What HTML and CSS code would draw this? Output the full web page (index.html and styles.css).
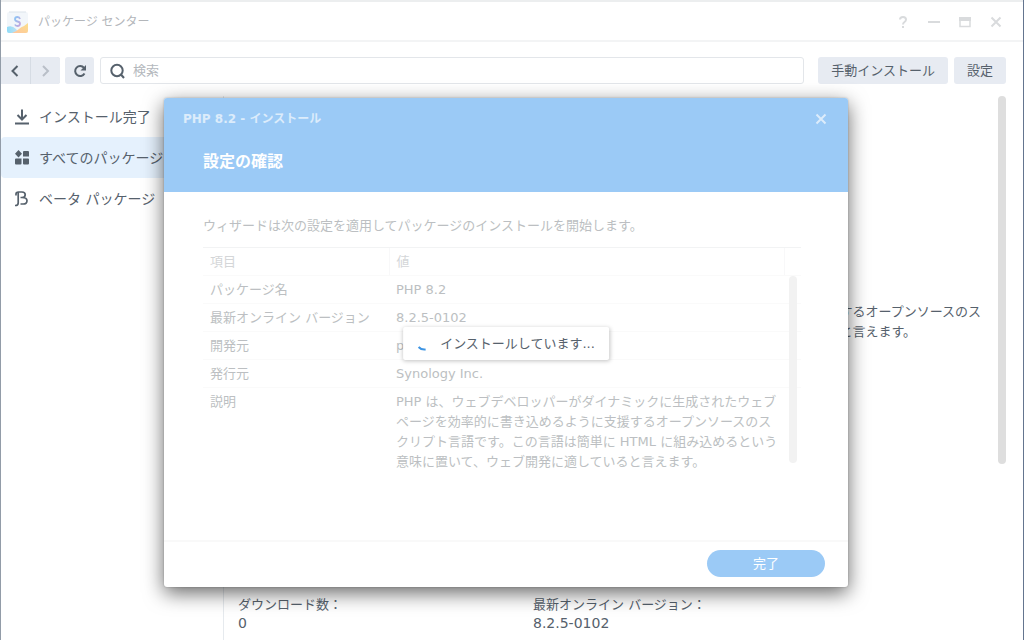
FILE: index.html
```html
<!DOCTYPE html>
<html lang="ja">
<head>
<meta charset="utf-8">
<title>パッケージ センター</title>
<link rel="stylesheet" href="styles.css">
</head>
<body>
<div class="window">
  <header class="titlebar">
    <svg class="app-icon" viewBox="0 0 22 22" aria-hidden="true">
      <defs>
        <linearGradient id="bagBlue" x1="0" x2="1"><stop offset="0" stop-color="#8fdcf8"/><stop offset="1" stop-color="#c8e2f2"/></linearGradient>
        <linearGradient id="bagWarm" x1="0" y1="1" x2="1" y2="0"><stop offset="0" stop-color="#ffc5a0"/><stop offset="1" stop-color="#fbdf8b"/></linearGradient>
        <linearGradient id="bagS" x1="0" y1="0" x2="1" y2="1"><stop offset="0" stop-color="#8cc4f5"/><stop offset="1" stop-color="#c7a6dc"/></linearGradient>
      </defs>
      <rect x="0" y="1" width="21" height="21" rx="2" fill="#f2f6fa"/>
      <path d="M2 1H19" stroke="#dbe3ea" stroke-width="1"/>
      <path d="M0 16Q5 14 9 18L12 22H2Q0 22 0 20Z" fill="url(#bagBlue)"/>
      <path d="M5 22Q10 20 12 18T17 15L21 12V20Q21 22 19 22Z" fill="url(#bagWarm)"/>
      <path d="M13 8Q12.500 6 10.500 6Q8 6 8 8.300Q8 10 10.500 10.500Q13 11 13 12.800Q13 15 10.500 15Q8.500 15 8 13.500" fill="none" stroke="url(#bagS)" stroke-width="1.800"/>
    </svg>
    <h1 class="app-title">パッケージ センター</h1>
    <div class="window-controls">
      <button class="control" aria-label="ヘルプ"><svg viewBox="0 0 14 14"><path d="M4 4.500Q4 2 7 2T10 4.500Q10 6 8.500 7Q7 8 7 9.500M7 11V13"/></svg></button>
      <button class="control" aria-label="最小化"><svg viewBox="0 0 14 14"><path d="M1 7H13"/></svg></button>
      <button class="control" aria-label="最大化"><svg viewBox="0 0 14 14"><path d="M2 3V11.500H12V3" stroke-width="1.500"/><path d="M1 4H13" stroke-width="4"/></svg></button>
      <button class="control" aria-label="閉じる"><svg viewBox="0 0 14 14"><path d="M2.500 2.500L11.500 11.500M11.500 2.500L2.500 11.500"/></svg></button>
    </div>
  </header>

  <div class="toolbar">
    <div class="nav-group">
      <button class="tool-btn" aria-label="戻る"><svg viewBox="0 0 14 14"><path d="M8.500 2L3.500 7L8.500 12"/></svg></button>
      <button class="tool-btn muted" aria-label="進む"><svg viewBox="0 0 14 14"><path d="M4 2L9 7L4 12"/></svg></button>
    </div>
    <button class="tool-btn refresh" aria-label="更新"><svg viewBox="0 0 14 14"><path d="M11.500 9.500A5 5 0 1 1 11 3.800"/><path d="M13 1V6.500H7.500Z" class="solid"/></svg></button>
    <label class="search">
      <svg viewBox="0 0 16 16" aria-hidden="true"><circle cx="7" cy="7.500" r="5.700"/><path d="M10.500 11L14 15"/></svg>
      <input type="text" placeholder="検索" aria-label="検索">
    </label>
    <button class="text-btn">手動インストール</button>
    <button class="text-btn">設定</button>
  </div>

  <div class="content">
    <nav class="sidebar">
      <a class="side-item" href="#installed"><svg viewBox="0 0 16 16"><path d="M8 0.500V10M3.500 6L8 10.500L12.500 6M1 14.500H15"/></svg>インストール完了</a>
      <a class="side-item active" href="#all"><svg viewBox="0 0 16 16"><path class="solid" d="M4.500 0L8 3.700L4.500 7.500L1 3.700ZM10 1H14Q15 1 15 2V6.500H9V2Q9 1 10 1ZM2 8.500H7.500V13.500Q7.500 14.500 6.500 14.500H2Q1 14.500 1 13.500V9.500Q1 8.500 2 8.500ZM9 8.500H14Q15 8.500 15 9.500V13.500Q15 14.500 14 14.500H10Q9 14.500 9 13.500Z"/></svg>すべてのパッケージ</a>
      <a class="side-item" href="#beta"><svg viewBox="0 0 16 16"><path stroke-width="1.700" d="M1 14.500H1.500Q4.200 14.500 4.200 12V1M2 4.500V3Q2 1 4.500 1H8Q11.200 1 11.200 3.700T8 6.500H6.500M8 6.500Q13 6.500 13 9.800T9 13H6.500"/></svg>ベータ パッケージ</a>
    </nav>
    <main class="detail">
      <p class="summary">するオープンソースのス<br>と言えます。</p>
      <dl class="facts">
        <div><dt>ダウンロード数：</dt><dd>0</dd></div>
        <div><dt>最新オンライン バージョン：</dt><dd>8.2.5-0102</dd></div>
      </dl>
      <div class="page-scroll"></div>
    </main>
  </div>
</div>

<section class="dialog" role="dialog" aria-labelledby="dialog-title">
  <header class="dialog-head">
    <div class="dialog-bar">
      <h2 id="dialog-title">PHP 8.2 - インストール</h2>
      <button class="dialog-close" aria-label="閉じる"><svg viewBox="0 0 14 14"><path d="M2.500 2.500L11.500 11.500M11.500 2.500L2.500 11.500"/></svg></button>
    </div>
    <h3>設定の確認</h3>
  </header>
  <div class="dialog-body">
    <p class="intro">ウィザードは次の設定を適用してパッケージのインストールを開始します。</p>
    <div class="table-wrap">
      <table>
        <thead><tr><th class="key">項目</th><th>値</th><th class="gutter"></th></tr></thead>
        <tbody>
          <tr><td>パッケージ名</td><td colspan="2">PHP 8.2</td></tr>
          <tr><td>最新オンライン バージョン</td><td colspan="2">8.2.5-0102</td></tr>
          <tr><td>開発元</td><td colspan="2">php</td></tr>
          <tr><td>発行元</td><td colspan="2">Synology Inc.</td></tr>
          <tr class="last"><td>説明</td><td colspan="2">PHP は、ウェブデベロッパーがダイナミックに生成されたウェブ<br>ページを効率的に書き込めるように支援するオープンソースのス<br>クリプト言語です。この言語は簡単に HTML に組み込めるという<br>意味に置いて、ウェブ開発に適していると言えます。</td></tr>
        </tbody>
      </table>
      <div class="table-scroll"></div>
    </div>
  </div>
  <footer class="dialog-foot"><button class="done">完了</button></footer>
  <div class="progress" role="status">
    <svg viewBox="0 0 14 14" aria-hidden="true"><path d="M2.500 10Q5 13 9.500 12.500"/></svg>
    <span>インストールしています...</span>
  </div>
</section>
</body>
</html>
```
FILE: styles.css
```css
* { box-sizing: border-box; }
body {
  margin: 0;
  height: 100vh;
  overflow: hidden;
  position: relative;
  background: #fff;
  color: #56616c;
  font-family: "DejaVu Sans", "Noto Sans CJK JP", sans-serif;
  font-size: 13px;
  line-height: 20px;
}
h1, h2, h3, p, dl, dd { margin: 0; }
button { border: 0; padding: 0; font: inherit; color: inherit; background: none; }
svg { fill: none; stroke: currentColor; stroke-width: 2; flex: none; }
svg .solid { fill: currentColor; stroke: none; }

.window {
  height: 100%;
  display: flex;
  flex-direction: column;
  border-left: 1px solid #929ca8;
  border-right: 1px solid #64758f;
}
.titlebar {
  display: flex;
  align-items: center;
  height: 42px;
  padding: 2px 20px 0 6px;
  border-top: 2px solid #eceeef;
  border-bottom: 2px solid #f3f4f5;
  color: #b3b6ba;
}
.app-icon { width: 22px; height: 22px; stroke: none; }
.app-title { margin-left: 9px; font-size: 12px; font-weight: 400; flex: 1; }
.window-controls { display: flex; gap: 17px; color: #d9dbdd; }
.control { display: flex; }
.control svg { width: 14px; height: 14px; }

.toolbar { display: flex; padding: 15px 17px 0 0; height: 42px; }
.nav-group { display: flex; gap: 1px; background: #d6dce4; border-radius: 0 3px 3px 0; overflow: hidden; }
.tool-btn {
  display: flex;
  align-items: center;
  justify-content: center;
  width: 29px;
  background: #e7ebf2;
}
.tool-btn svg { width: 14px; height: 14px; }
.muted { color: #b9bfc8; }
.refresh { margin-left: 5px; border-radius: 3px; }
.search {
  flex: 1;
  min-width: 0;
  display: flex;
  align-items: center;
  gap: 7px;
  margin: 0 14px 0 6px;
  padding-left: 9px;
  border: 1px solid #e3e6ea;
  border-radius: 3px;
}
.search svg { width: 16px; height: 16px; }
.search input { flex: 1; min-width: 0; border: 0; padding: 0; outline: 0; font: inherit; background: none; }
.search input::placeholder { color: #b4b8bd; opacity: 1; }
.text-btn { padding: 0 13px; background: #e7ebf2; border-radius: 3px; }
.text-btn + .text-btn { margin-left: 6px; }

.content { flex: 1; min-height: 0; display: flex; padding-top: 12px; }
.sidebar { width: 223px; border-right: 1px solid #e6eaee; }
.side-item {
  display: flex;
  align-items: center;
  gap: 9px;
  height: 41px;
  padding-left: 13px;
  color: inherit;
  text-decoration: none;
  font-size: 14px;
}
.side-item svg { width: 16px; height: 16px; }
.active { background: #e5f1fd; border-radius: 4px; }
.detail {
  flex: 1;
  position: relative;
  display: flex;
  flex-direction: column;
  justify-content: space-between;
  padding: 206px 42px 7px 14px;
}
.summary { align-self: flex-end; }
.facts { display: grid; grid-template-columns: 295px 1fr; line-height: 19px; }
.facts dd { font-size: 14px; }
.page-scroll {
  position: absolute;
  top: 0;
  right: 17px;
  width: 8px;
  height: 368px;
  border-radius: 4px;
  background: #dedede;
}

.dialog {
  position: absolute;
  top: 98px;
  left: 164px;
  right: 176px;
  background: #fff;
  border-radius: 3px;
  box-shadow: 0 6px 20px rgba(0, 0, 0, 0.6), 0 0 2px rgba(0, 0, 0, 0.25);
  color: #bcbfc2;
}
.dialog-head { height: 94px; padding: 11px 20px 0 19px; background: #9bcaf6; border-radius: 3px 3px 0 0; }
.dialog-bar { display: flex; justify-content: space-between; align-items: center; color: #dcecfb; }
.dialog-bar h2 { font-size: 12px; line-height: 20px; }
.dialog-close { display: flex; }
.dialog-close svg { width: 14px; height: 14px; }
.dialog-head h3 { margin: 21px 0 0 20px; font-size: 16px; line-height: 24px; color: #fff; }
.dialog-body { padding: 24px 47px 0 39px; }
.intro { margin-bottom: 11px; white-space: nowrap; }
.table-wrap { position: relative; }
table { width: 100%; border-collapse: collapse; table-layout: fixed; }
th, td { padding: 4px 0 3px 7px; text-align: left; vertical-align: top; font-weight: 400; border-bottom: 1px solid #fafafa; white-space: nowrap; }
th { border-top: 1px solid #f2f3f4; color: #d4d6d8; }
th + th { border-left: 1px solid #f8f8f9; }
.key { width: 186px; }
.gutter { width: 17px; }
.last td { border-bottom: 0; }
.table-scroll {
  position: absolute;
  top: 29px;
  right: 4px;
  width: 8px;
  height: 187px;
  border-radius: 4px;
  background: #f2f2f2;
}
.dialog-foot { display: flex; justify-content: flex-end; margin-top: 65px; padding: 8px 23px 10px; border-top: 2px solid #f9f9f9; }
.done { width: 118px; height: 27px; border-radius: 14px; background: #9bcaf6; color: #fff; }
.progress {
  position: absolute;
  top: 229px;
  left: 50%;
  transform: translateX(-50%);
  display: flex;
  align-items: center;
  gap: 10px;
  padding: 7px 14px 6px 13px;
  background: #fff;
  border-radius: 2px;
  box-shadow: 0 1px 4px rgba(0, 0, 0, 0.25);
  color: #56616c;
  white-space: nowrap;
}
.progress svg { width: 14px; height: 14px; color: #3d94e3; }
```
